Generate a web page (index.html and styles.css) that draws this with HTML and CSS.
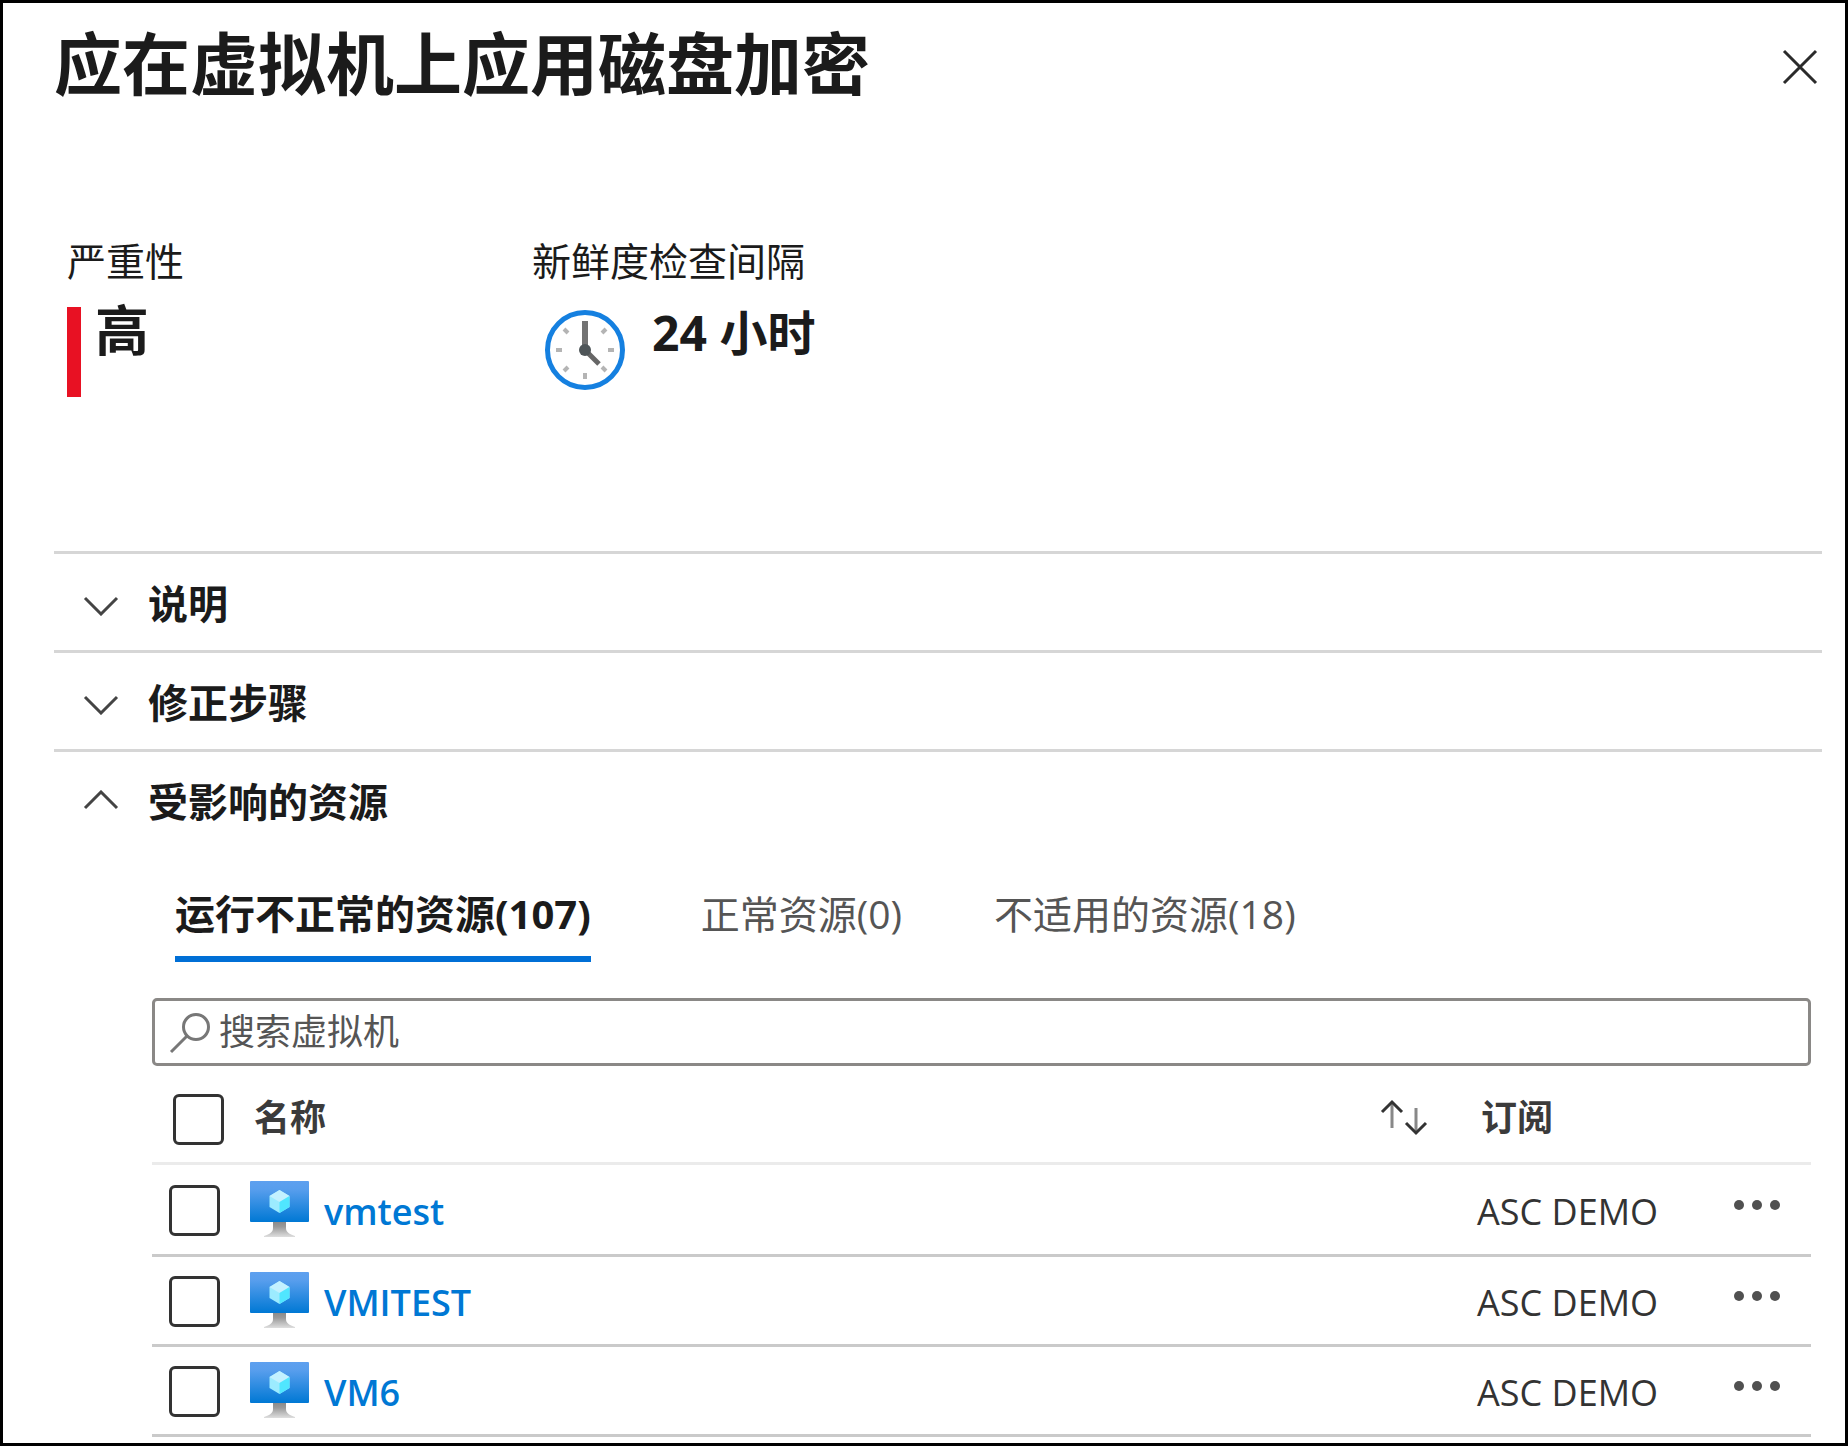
FILE: index.html
```html
<!DOCTYPE html>
<html lang="zh-CN">
<head>
<meta charset="utf-8">
<meta name="viewport" content="width=device-width, initial-scale=1">
<title>应在虚拟机上应用磁盘加密</title>
<link rel="stylesheet" href="styles.css">
</head>
<body>
<svg class="defs" width="0" height="0" aria-hidden="true">
  <defs>
    <linearGradient id="screen" x1="0" y1="0" x2="0" y2="1"><stop offset="0" stop-color="#5ea0ef"/><stop offset="0.2" stop-color="#589eed"/><stop offset="1" stop-color="#0078d4"/></linearGradient>
    <linearGradient id="stand" x1="0" y1="0" x2="0" y2="1"><stop offset="0" stop-color="#858585"/><stop offset="0.4" stop-color="#9a9a9a"/><stop offset="1" stop-color="#dedede"/></linearGradient>
    <symbol id="vm" viewBox="0 0 59 57">
      <path d="M23 39h13v8c0 4 3 6 9 8v1H14v-1c6-2 9-4 9-8z" fill="url(#stand)"/>
      <rect width="59" height="41" rx="1" fill="url(#screen)"/>
      <path d="M29.500 9l10 6v11l-10 6-10-6V15z" fill="#9cebff"/>
      <path d="M29.500 9l10 6-10 6-10-6z" fill="#c3f1ff"/>
      <path d="M29.500 21l10-6v11l-10 6z" fill="#50e6ff"/>
    </symbol>
    <symbol id="chevron" viewBox="0 0 36 24"><path d="M2 6l16 16L34 6" fill="none" stroke="#444" stroke-width="3"/></symbol>
    <symbol id="more" viewBox="0 0 48 12"><g fill="#505050"><circle cx="6" cy="6" r="5"/><circle cx="24" cy="6" r="5"/><circle cx="42" cy="6" r="5"/></g></symbol>
  </defs>
</svg>
<main class="panel">
  <header class="panel-header">
    <h1 class="title">应在虚拟机上应用磁盘加密</h1>
    <button class="close" type="button" aria-label="关闭">
      <svg width="36" height="36" viewBox="0 0 36 36"><path d="M2 2l32 32M34 2L2 34" stroke="#2b2b2b" stroke-width="3"/></svg>
    </button>
  </header>

  <section class="summary">
    <div class="fact">
      <h2 class="fact-label">严重性</h2>
      <div class="fact-value"><span class="severity-bar"></span><strong class="severity">高</strong></div>
    </div>
    <div class="fact">
      <h2 class="fact-label">新鲜度检查间隔</h2>
      <div class="fact-value interval">
        <svg class="clock" width="82" height="84" viewBox="0 0 82 84" aria-hidden="true">
          <g transform="translate(0 2)">
            <circle cx="41" cy="41" r="37.500" fill="#fff" stroke="#1580e0" stroke-width="5"/>
            <g stroke="#b4b4b4" stroke-width="4"><path d="M41 64v6M12 41h6M64 41h6M20 20l4 4M62 20l-4 4M20 62l4-4M62 62l-4-4"/></g>
            <path d="M41 12v29" stroke="#737373" stroke-width="6"/>
            <path d="M41 41l14 14" stroke="#666" stroke-width="5"/>
            <circle cx="41" cy="41" r="6" fill="#4e5558"/>
          </g>
        </svg>
        <strong class="hours">24 小时</strong>
      </div>
    </div>
  </section>

  <section class="accordion">
    <h2 class="accordion-heading"><button class="accordion-toggle" type="button" aria-expanded="false"><svg class="chevron" width="36" height="24"><use href="#chevron"/></svg>说明</button></h2>
    <h2 class="accordion-heading"><button class="accordion-toggle" type="button" aria-expanded="false"><svg class="chevron" width="36" height="24"><use href="#chevron"/></svg>修正步骤</button></h2>
    <h2 class="accordion-heading"><button class="accordion-toggle" type="button" aria-expanded="true"><svg class="chevron chevron-up" width="36" height="24"><use href="#chevron"/></svg>受影响的资源</button></h2>
  </section>

  <section class="resources">
    <div class="tabs" role="tablist">
      <button class="tab tab-active" type="button" role="tab" aria-selected="true">运行不正常的资源(107)</button>
      <button class="tab" type="button" role="tab" aria-selected="false">正常资源(0)</button>
      <button class="tab" type="button" role="tab" aria-selected="false">不适用的资源(18)</button>
    </div>
    <label class="search">
      <svg width="42" height="46" viewBox="0 0 42 46" aria-hidden="true"><circle cx="27" cy="18" r="12.500" fill="none" stroke="#777" stroke-width="3"/><path d="M18 27L2 43" stroke="#777" stroke-width="3"/></svg>
      <input class="search-input" type="text" placeholder="搜索虚拟机" aria-label="搜索虚拟机">
    </label>
    <table class="table">
      <thead>
        <tr>
          <th class="col-select"><input class="check" type="checkbox" aria-label="全选"></th>
          <th><div class="name-head">名称<svg width="50" height="38" viewBox="0 0 50 38" aria-hidden="true"><g fill="none" stroke-width="3"><path d="M13 3v26M37 9v24" stroke="#888"/><path d="M3 13L13 3l10 10M27 24l10 10 10-10" stroke="#333"/></g></svg></div></th>
          <th class="col-sub">订阅</th>
          <th class="col-actions"></th>
        </tr>
      </thead>
      <tbody>
        <tr>
          <td><input class="check" type="checkbox" aria-label="选择 vmtest"></td>
          <td><a class="vm-link" href="#vmtest"><svg width="59" height="57"><use href="#vm"/></svg><span class="cell-text">vmtest</span></a></td>
          <td><span class="cell-text">ASC DEMO</span></td>
          <td><button class="more" type="button" aria-label="更多"><svg width="48" height="12"><use href="#more"/></svg></button></td>
        </tr>
        <tr>
          <td><input class="check" type="checkbox" aria-label="选择 VMITEST"></td>
          <td><a class="vm-link" href="#vmitest"><svg width="59" height="57"><use href="#vm"/></svg><span class="cell-text">VMITEST</span></a></td>
          <td><span class="cell-text">ASC DEMO</span></td>
          <td><button class="more" type="button" aria-label="更多"><svg width="48" height="12"><use href="#more"/></svg></button></td>
        </tr>
        <tr>
          <td><input class="check" type="checkbox" aria-label="选择 VM6"></td>
          <td><a class="vm-link" href="#vm6"><svg width="59" height="57"><use href="#vm"/></svg><span class="cell-text">VM6</span></a></td>
          <td><span class="cell-text">ASC DEMO</span></td>
          <td><button class="more" type="button" aria-label="更多"><svg width="48" height="12"><use href="#more"/></svg></button></td>
        </tr>
      </tbody>
    </table>
  </section>
</main>
</body>
</html>
```
FILE: styles.css
```css
* {
  box-sizing: border-box;
}

body {
  margin: 0;
  background: #fff;
  color: #1b1b1b;
  font-family: "Open Sans", "Noto Sans CJK SC", sans-serif;
}

h1,
h2 {
  margin: 0;
}

button {
  padding: 0;
  border: 0;
  background: none;
  color: inherit;
  font: inherit;
  cursor: pointer;
}

svg {
  display: block;
  flex: none;
}

.defs {
  position: absolute;
}

.panel {
  min-height: 100vh;
  padding: 0 23px 0 51px;
  border: 3px solid #000;
}

.panel-header {
  display: flex;
  align-items: center;
  justify-content: space-between;
  height: 128px;
}

.title {
  padding-bottom: 6px;
  font-size: 68px;
  font-weight: 700;
  line-height: 100px;
}

.close {
  padding: 4px;
}

.summary {
  display: flex;
  gap: 348px;
  height: 420px;
  padding: 106px 13px 0;
}

.fact-label {
  font-size: 39px;
  font-weight: 400;
  line-height: 48px;
}

.fact-value {
  display: flex;
  gap: 14px;
  padding-top: 22px;
}

.severity-bar {
  width: 14px;
  height: 90px;
  background: #e81123;
}

.severity {
  font-size: 54px;
  line-height: 46px;
}

.interval {
  gap: 26px;
  padding-left: 12px;
}

.hours {
  font-size: 48px;
  line-height: 52px;
}

.accordion-heading {
  border-top: 3px solid #d6d6d6;
  font-size: 40px;
  font-weight: 700;
}

.accordion-toggle {
  display: flex;
  align-items: center;
  gap: 29px;
  width: 100%;
  height: 96px;
  padding: 4px 0 0 29px;
  line-height: 60px;
}

.chevron-up {
  transform: scaleY(-1);
}

.resources {
  padding: 36px 11px 0 98px;
}

.tabs {
  display: flex;
  gap: 92px;
  padding-left: 23px;
  font-size: 39px;
  line-height: 60px;
}

.tab {
  padding-bottom: 12px;
  border-bottom: 6px solid transparent;
  color: #555;
}

.tab-active {
  margin-right: 18px;
  border-color: #006fd6;
  color: #1b1b1b;
  font-size: 40px;
  font-weight: 700;
}

.search {
  display: flex;
  align-items: center;
  gap: 8px;
  height: 68px;
  margin-top: 36px;
  padding: 0 14px;
  border: 3px solid #8a8886;
  border-radius: 5px;
}

.search-input {
  flex: 1;
  min-width: 0;
  padding: 0;
  border: 0;
  outline: 0;
  background: none;
  color: #333;
  font: inherit;
  font-size: 36px;
  line-height: 54px;
}

.search-input::placeholder {
  color: #555;
  opacity: 1;
}

.table {
  width: 100%;
  border-collapse: separate;
  border-spacing: 0;
  table-layout: fixed;
  font-size: 36px;
  line-height: 48px;
}

.table th {
  height: 99px;
  padding: 8px 0 0 4px;
  border-bottom: 3px solid #ebebeb;
  color: #3b3b3b;
  font-weight: 700;
  text-align: left;
}

.table td {
  height: 90px;
  padding: 0;
  border-bottom: 3px solid #cacaca;
  color: #333;
}

.table tbody tr:first-child td {
  height: 92px;
}

.col-select {
  width: 98px;
}

.col-sub {
  width: 250px;
}

.col-actions {
  width: 84px;
}

.check {
  display: block;
  width: 51px;
  height: 51px;
  margin: 2px 0 0 17px;
  border: 3px solid #333;
  border-radius: 6px;
  appearance: none;
  background: #fff;
}

.name-head {
  display: flex;
  align-items: center;
  justify-content: space-between;
  padding-right: 48px;
}

.vm-link {
  display: flex;
  align-items: center;
  gap: 15px;
  color: #0078d4;
  font-weight: 600;
  text-decoration: none;
}

.cell-text {
  display: block;
  padding-top: 4px;
}

.more {
  display: block;
  padding: 0 6px 10px;
}
```
